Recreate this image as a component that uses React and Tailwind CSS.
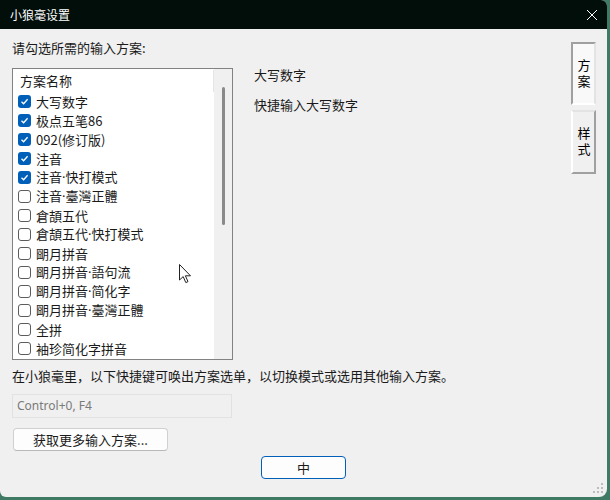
import React from 'react';

const font = { fontFamily: '"Noto Sans CJK SC", "Noto Sans", sans-serif' };
const latin = { fontFamily: '"Noto Sans", "Liberation Sans", sans-serif' };

const schemas = [
  { name: '大写数字', on: true },
  { name: '极点五笔86', on: true },
  { name: '092(修订版)', on: true },
  { name: '注音', on: true },
  { name: '注音·快打模式', on: true },
  { name: '注音·臺灣正體', on: false },
  { name: '倉頡五代', on: false },
  { name: '倉頡五代·快打模式', on: false },
  { name: '朙月拼音', on: false },
  { name: '朙月拼音·語句流', on: false },
  { name: '朙月拼音·简化字', on: false },
  { name: '朙月拼音·臺灣正體', on: false },
  { name: '全拼', on: false },
  { name: '袖珍简化字拼音', on: false },
];

function Check({ on }) {
  if (on) {
    return (
      <span className="w-[13px] h-[13px] rounded-[3px] bg-[#005fb8] flex items-center justify-center shrink-0">
        <svg width="9" height="9" viewBox="0 0 9 9">
          <polyline points="1.5,4.8 3.6,6.8 7.6,2.2" fill="none" stroke="white" strokeWidth="1.3" />
        </svg>
      </span>
    );
  }
  return <span className="w-[13px] h-[13px] rounded-[3px] border border-[#5c5c5c] bg-white shrink-0" />;
}

// 中点用西文字体，保持窄宽
function SchemaName({ name }) {
  const parts = name.split('·');
  return (
    <span>
      {parts.map((p, i) => (
        <React.Fragment key={i}>
          {i > 0 && <span style={latin}>·</span>}
          {p}
        </React.Fragment>
      ))}
    </span>
  );
}

export default function App() {
  return (
    <div className="w-[610px] h-[500px] bg-[#3f7b64] overflow-hidden" style={font}>
      <div className="w-[607px] h-[497px] bg-[#f0f0f0] rounded-br-[8px] rounded-bl-[6px] rounded-tr-[6px] overflow-hidden flex flex-col relative">
        {/* title bar */}
        <div className="h-[29px] bg-[#020e0a] flex items-center justify-between pl-[10px] pr-[8px] shrink-0">
          <span className="text-white text-[12px] leading-none">小狼毫设置</span>
          <svg width="12" height="12" viewBox="0 0 12 12" className="mr-[1px]">
            <path d="M1 1 L11 11 M11 1 L1 11" stroke="white" strokeWidth="1" />
          </svg>
        </div>

        <div className="flex flex-col px-[12px] text-[13px] text-[#1a1a1a]">
          <div className="flex mt-[10px]">
            {/* left column */}
            <div className="flex flex-col">
              <div className="h-[18px] leading-[18px]">请勾选所需的输入方案:</div>
              <div className="mt-[11px] w-[221px] h-[292px] border border-[#828282] bg-white flex">
                <div className="flex-1 flex flex-col">
                  <div className="h-[22px] flex items-center pl-[7px] border-r border-[#e5e5e5] mt-[1px]">
                    方案名称
                  </div>
                  {schemas.map(s => (
                    <div key={s.name} className="h-[19px] flex items-center pl-[5px] gap-[5px] whitespace-nowrap">
                      <Check on={s.on} />
                      <SchemaName name={s.name} />
                    </div>
                  ))}
                </div>
                <div className="w-[18px] bg-[#f0f0f0] flex justify-center pt-[18px]">
                  <div className="w-[3px] h-[138px] bg-[#8a8a8a] rounded-full" />
                </div>
              </div>
            </div>

            {/* description */}
            <div className="flex-1 flex flex-col pl-[21px] pt-[27px]">
              <div className="h-[18px] leading-[18px]">大写数字</div>
              <div className="h-[18px] leading-[18px] mt-[12px]">快捷输入大写数字</div>
            </div>

            {/* vertical tabs */}
            <div className="flex flex-col pt-[3px] gap-[5px] mr-[-1px]">
              <div className="w-[25px] h-[63px] bg-[#f9f9f9] border-2 border-l-[#a0a0a0] border-t-[#a0a0a0] border-r-[#e3e3e3] border-b-[#ffffff] flex items-center justify-center text-[13px] text-black">
                <span className="[writing-mode:vertical-rl] tracking-[3px] leading-[16px] pt-[2px]">方案</span>
              </div>
              <div className="w-[25px] h-[64px] bg-[#f0f0f0] border-2 border-l-[#ffffff] border-t-[#e3e3e3] border-r-[#a0a0a0] border-b-[#a0a0a0] flex items-center justify-center text-[13px] text-black">
                <span className="[writing-mode:vertical-rl] tracking-[3px] leading-[16px] pt-[2px]">样式</span>
              </div>
            </div>
          </div>

          <div className="h-[18px] leading-[18px] mt-[7px] whitespace-nowrap">
            在小狼毫里，以下快捷键可唤出方案选单，以切换模式或选用其他输入方案。
          </div>

          <div
            className="mt-[9px] w-[220px] h-[24px] border border-[#e2e2e2] bg-[#f0f0f0] flex items-center pl-[4px] text-[12px] text-[#7a7a7a]"
            style={latin}
          >
            Control+0, F4
          </div>

          <button className="mt-[10px] ml-[1px] w-[155px] h-[23px] rounded-[4px] border border-[#d0d0d0] border-b-[#b8b8b8] bg-[#fdfdfd] flex items-center justify-center text-[13px] text-[#1a1a1a]">
            获取更多输入方案...
          </button>

          <div className="flex justify-center mt-[5px]">
            <button className="w-[85px] h-[23px] rounded-[4px] border border-[#005fb8] bg-[#fdfdfd] flex items-center justify-center text-[13px] text-[#1a1a1a]">
              中
            </button>
          </div>
        </div>

        {/* mouse cursor */}
        <svg className="absolute left-[179px] top-[264px]" width="13" height="20" viewBox="0 0 13 20">
          <path d="M0.5 0.5 L0.5 16 L4.2 12.6 L6.8 18.6 L9 17.6 L6.4 11.8 L11.5 11.8 Z" fill="white" stroke="#222" strokeWidth="1" />
        </svg>

        {/* size grip */}
        <svg className="absolute right-[3px] bottom-[3px]" width="11" height="11" viewBox="0 0 11 11">
          <rect x="8" y="0" width="2" height="2" fill="#bdbdbd" />
          <rect x="4" y="4" width="2" height="2" fill="#bdbdbd" />
          <rect x="8" y="4" width="2" height="2" fill="#bdbdbd" />
          <rect x="0" y="8" width="2" height="2" fill="#bdbdbd" />
          <rect x="4" y="8" width="2" height="2" fill="#bdbdbd" />
          <rect x="8" y="8" width="2" height="2" fill="#bdbdbd" />
        </svg>
      </div>
    </div>
  );
}
